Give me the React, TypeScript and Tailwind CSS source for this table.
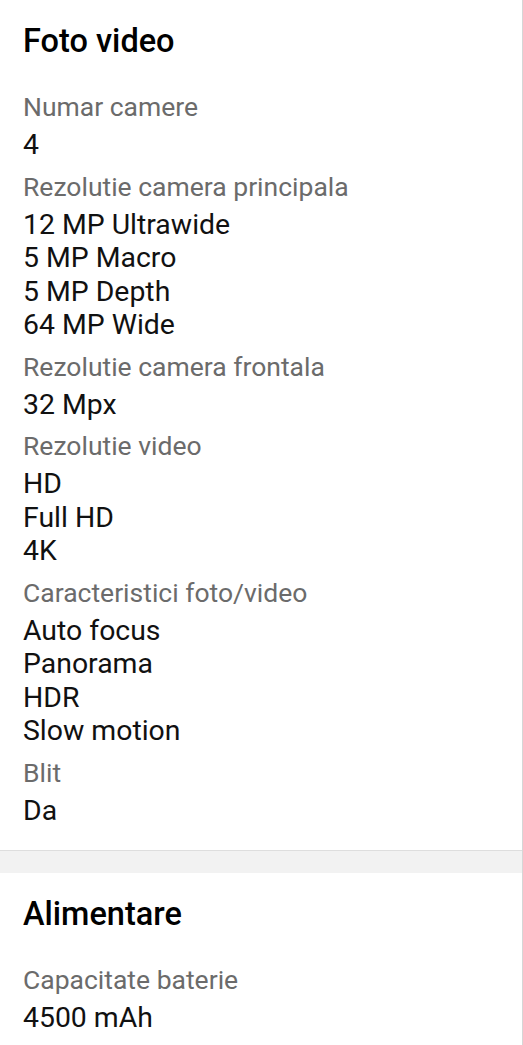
import React from 'react';

type Spec = { label: string; values: string[] };

const fotoVideo: Spec[] = [
    { label: 'Numar camere', values: ['4'] },
    {
        label: 'Rezolutie camera principala',
        values: ['12 MP Ultrawide', '5 MP Macro', '5 MP Depth', '64 MP Wide'],
    },
    { label: 'Rezolutie camera frontala', values: ['32 Mpx'] },
    { label: 'Rezolutie video', values: ['HD', 'Full HD', '4K'] },
    {
        label: 'Caracteristici foto/video',
        values: ['Auto focus', 'Panorama', 'HDR', 'Slow motion'],
    },
    { label: 'Blit', values: ['Da'] },
];

const alimentare: Spec[] = [{ label: 'Capacitate baterie', values: ['4500 mAh'] }];

function Section({ title, specs }: { title: string; specs: Spec[] }) {
    return (
        <section className="bg-white px-[23px] pt-[21px] pb-[15px]">
            <h2 className="text-[32.5px] leading-[40px] font-medium text-black mb-[29px]">{title}</h2>
            <div className="flex flex-col">
                {specs.map((s) => (
                    <div key={s.label} className="mb-2">
                        <div className="text-[26.5px] leading-[34px] text-[#6b6b6b] mb-1">{s.label}</div>
                        {s.values.map((v) => (
                            <div key={v} className="text-[28.4px] leading-[33.5px] text-[#111]">
                                {v}
                            </div>
                        ))}
                    </div>
                ))}
            </div>
        </section>
    );
}

export default function App() {
    return (
        <div
            className="w-[523px] h-[1045px] overflow-hidden bg-white border-r border-[#d6d6d6]"
            style={{ fontFamily: 'Roboto, "Noto Sans", sans-serif' }}
        >
            <Section title="Foto video" specs={fotoVideo} />
            <div className="h-[23px] bg-[#f2f2f2] border-t border-[#dedede]" />
            <Section title="Alimentare" specs={alimentare} />
        </div>
    );
}
